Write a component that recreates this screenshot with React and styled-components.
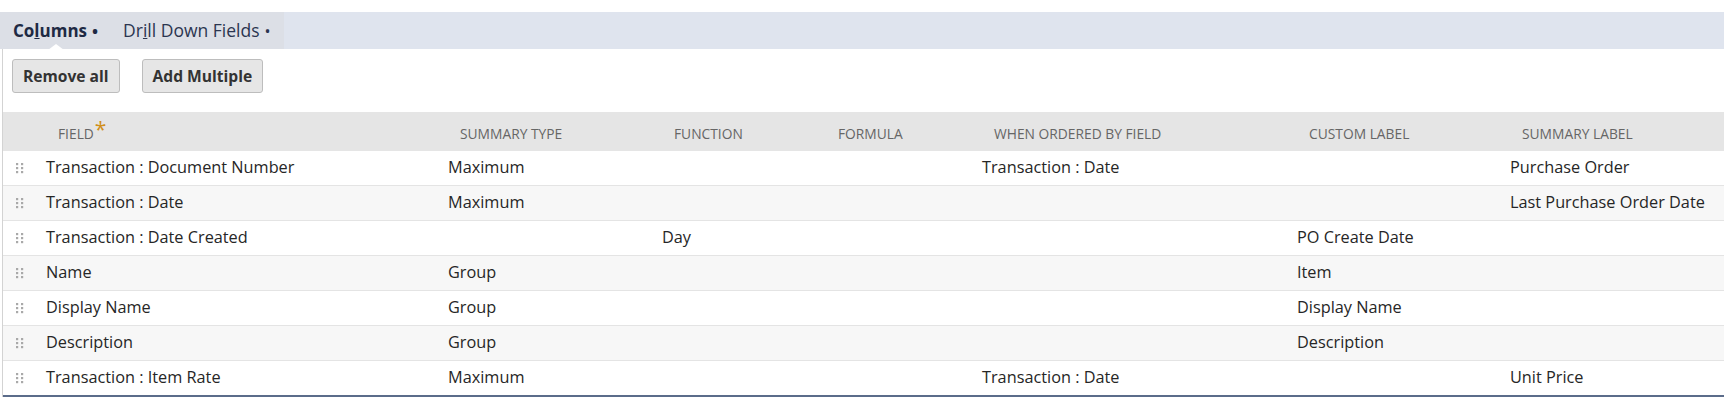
import React from "react";
import styled, { createGlobalStyle } from "styled-components";

const Global = createGlobalStyle`
  html, body { margin: 0; padding: 0; background: #fff; }
  body { font-family: "Open Sans", "Liberation Sans", sans-serif; color: #262626; }
`;

const Page = styled.div`
  padding-top: 12px;
  width: 1724px;
  height: 386px;
  overflow: hidden;
`;

const TabBar = styled.div`
  display: flex;
  height: 37px;
  background: #dfe4ee;
`;

const TabGroup = styled.div`
  display: flex;
  align-items: center;
  background: #dcdfe6;
  padding: 0 13px 0 13px;
  gap: 25px;
`;

const Tab = styled.div`
  position: relative;
  font-size: ${(p) => (p.$active ? "17px" : "17.5px")};
  font-weight: ${(p) => (p.$active ? 700 : 400)};
  color: ${(p) => (p.$active ? "#1e2a44" : "#2b3550")};
  white-space: nowrap;
  line-height: 37px;
  padding-top: 1px;
  ${(p) =>
    p.$active &&
    `&::after {
      content: "";
      position: absolute;
      left: 35px;
      bottom: 0;
      border-left: 8px solid transparent;
      border-right: 8px solid transparent;
      border-bottom: 6px solid #fff;
    }`}
`;

const Dot = styled.span`
  font-size: 16px;
  margin-left: 5px;
`;

const Panel = styled.div`
  margin-left: 2px;
  border-left: 1px solid #d3d3d3;
  padding-top: 10px;
`;

const Toolbar = styled.div`
  display: flex;
  gap: 22px;
  padding-left: 9px;
  margin-bottom: 19px;
`;

const Button = styled.button`
  height: 34px;
  padding: 0 10px;
  font-family: "Open Sans", "Liberation Sans", sans-serif;
  font-size: 15.6px;
  font-weight: 700;
  color: #333;
  background: #e6e6e6;
  border: 1px solid #bdbdbd;
  border-radius: 3px;
`;

const Table = styled.table`
  width: 1721px;
  border-collapse: collapse;
  table-layout: fixed;
  border-bottom: 2px solid #5b6c8a;
`;

const Th = styled.th`
  height: 34px;
  padding: 5px 0 0 20px;
  background: #e5e5e5;
  text-align: left;
  font-weight: 400;
  font-size: 13.8px;
  line-height: 18px;
  color: #666;
  text-transform: uppercase;
  white-space: nowrap;
`;

const Star = styled.span`
  color: #d08f1a;
  font-size: 21px;
  line-height: 10px;
  position: relative;
  top: -2px;
  margin-left: 1px;
`;

const Row = styled.tr`
  background: ${(p) => (p.$alt ? "#f7f7f7" : "#fff")};
  border-top: 1px solid #e4e4e4;
  &:first-child { border-top: none; }
`;

const Td = styled.td`
  height: 31px;
  padding: 0 0 3px 8px;
  font-size: 16.3px;
  line-height: 20px;
  color: #262626;
  white-space: nowrap;
`;

const HandleCell = styled.td`
  padding: 0 0 0 13px;
`;

const Handle = () => (
  <svg width="8" height="11" viewBox="0 0 8 11" style={{ display: "block" }}>
    {[0, 4, 8].map((y) =>
      [0, 5].map((x) => (
        <rect key={`${x}-${y}`} x={x} y={y} width="2.2" height="2.2" fill="#a9a9a9" />
      ))
    )}
  </svg>
);

const cols = [35, 402, 214, 164, 156, 315, 213, 222];

const rows = [
  ["Transaction : Document Number", "Maximum", "", "", "Transaction : Date", "", "Purchase Order"],
  ["Transaction : Date", "Maximum", "", "", "", "", "Last Purchase Order Date"],
  ["Transaction : Date Created", "", "Day", "", "", "PO Create Date", ""],
  ["Name", "Group", "", "", "", "Item", ""],
  ["Display Name", "Group", "", "", "", "Display Name", ""],
  ["Description", "Group", "", "", "", "Description", ""],
  ["Transaction : Item Rate", "Maximum", "", "", "Transaction : Date", "", "Unit Price"],
];

export default function App() {
  return (
    <Page>
      <Global />
      <TabBar>
        <TabGroup>
          <Tab $active>
            Co<u>l</u>umns<Dot>•</Dot>
          </Tab>
          <Tab>
            Dr<u>i</u>ll Down Fields<Dot>•</Dot>
          </Tab>
        </TabGroup>
      </TabBar>
      <Panel>
        <Toolbar>
          <Button>Remove all</Button>
          <Button>Add Multiple</Button>
        </Toolbar>
        <Table>
          <colgroup>
            {cols.map((w, i) => (
              <col key={i} style={{ width: w }} />
            ))}
          </colgroup>
          <thead>
            <tr>
              <Th />
              <Th>
                Field<Star>*</Star>
              </Th>
              <Th>Summary Type</Th>
              <Th>Function</Th>
              <Th>Formula</Th>
              <Th>When Ordered By Field</Th>
              <Th>Custom Label</Th>
              <Th>Summary Label</Th>
            </tr>
          </thead>
          <tbody>
            {rows.map((r, i) => (
              <Row key={i} $alt={i % 2 === 1}>
                <HandleCell>
                  <Handle />
                </HandleCell>
                {r.map((c, j) => (
                  <Td key={j}>{c}</Td>
                ))}
              </Row>
            ))}
          </tbody>
        </Table>
      </Panel>
    </Page>
  );
}
